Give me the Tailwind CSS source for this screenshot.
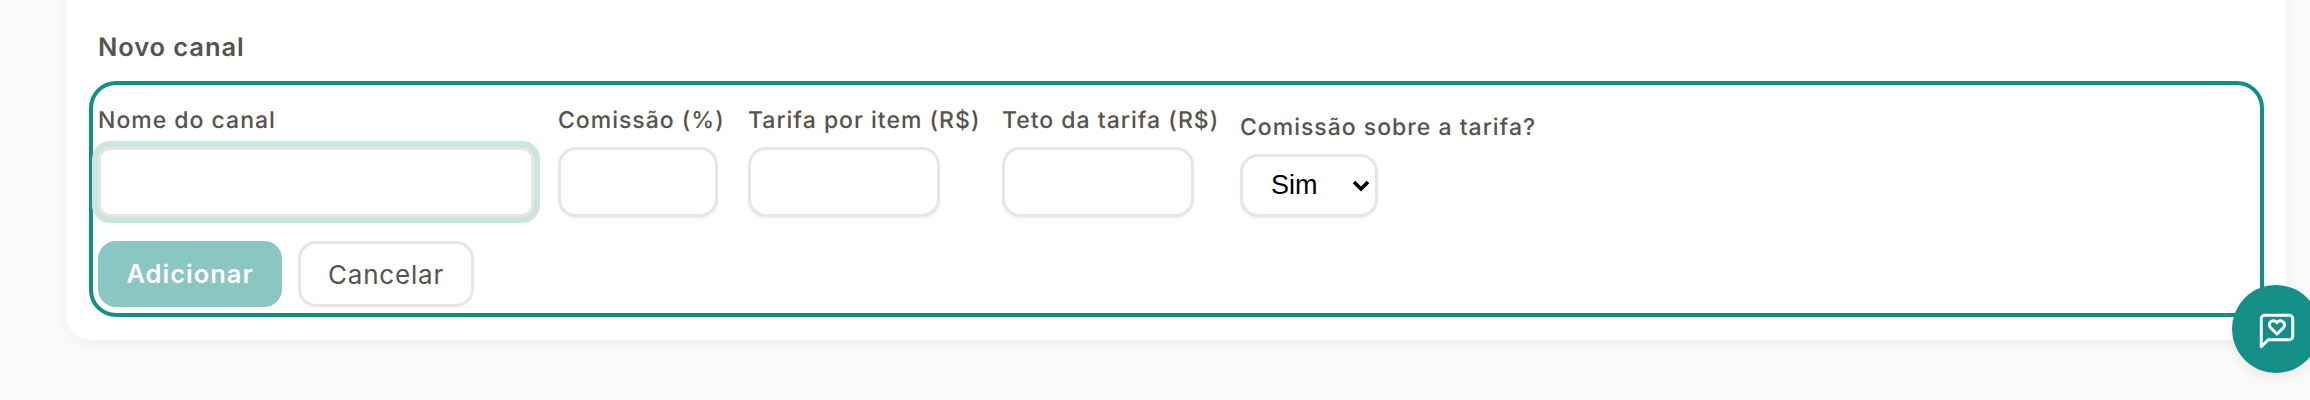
<!DOCTYPE html>
<html lang="pt-BR">
<head>
<meta charset="UTF-8" />
<title>Canais</title>
<script src="https://cdn.jsdelivr.net/npm/@tailwindcss/browser@4"></script>
</head>
<body class="bg-[#fbfaf8] h-[400px] overflow-hidden font-['Inter',sans-serif] [text-rendering:geometricPrecision] relative">
<div class="ml-[66px] mr-[24px] -mt-[24px] h-[364px] bg-white rounded-[24px] shadow-[0_3px_12px_rgba(0,0,0,0.05)] pt-[56px] pl-[23px] pr-[22px]">
  <h2 class="ml-[9px] h-[32px] leading-[32px] text-[25.5px] font-semibold tracking-[0.9px] text-[#57534e]">Novo canal</h2>

  <!-- form -->
  <form class="mt-[17px] h-[236px] border-4 border-[#148f87] rounded-[27px] pl-[5px] pt-[20px]">
    <div class="flex items-end gap-[24px]">
      <label class="flex flex-col w-[436px]">
        <span class="text-[23px] font-[450] leading-[30px] tracking-[1px] whitespace-nowrap text-[#57534e] mb-[12px]">Nome do canal</span>
        <input type="text" class="h-[70px] w-[436px] bg-white border-[3px] border-[#e9e6e2] rounded-[12px] shadow-[0_0_0_6px_#cce5e3]" />
      </label>
      <label class="flex flex-col w-[166px]">
        <span class="text-[23px] font-[450] leading-[30px] tracking-[1px] whitespace-nowrap text-[#57534e] mb-[12px]">Comissão (%)</span>
        <input type="text" class="h-[70px] w-[160px] bg-white border-[3px] border-[#e9e6e2] rounded-[18px] shadow-[0_2px_3px_rgba(0,0,0,0.05)]" />
      </label>
      <label class="flex flex-col w-[230px]">
        <span class="text-[23px] font-[450] leading-[30px] tracking-[1px] whitespace-nowrap text-[#57534e] mb-[12px]">Tarifa por item (R$)</span>
        <input type="text" class="h-[70px] w-[192px] bg-white border-[3px] border-[#e9e6e2] rounded-[18px] shadow-[0_2px_3px_rgba(0,0,0,0.05)]" />
      </label>
      <label class="flex flex-col w-[214px]">
        <span class="text-[23px] font-[450] leading-[30px] tracking-[1px] whitespace-nowrap text-[#57534e] mb-[12px]">Teto da tarifa (R$)</span>
        <input type="text" class="h-[70px] w-[192px] bg-white border-[3px] border-[#e9e6e2] rounded-[18px] shadow-[0_2px_3px_rgba(0,0,0,0.05)]" />
      </label>
      <label class="flex flex-col">
        <span class="text-[23px] font-[450] leading-[30px] tracking-[1px] whitespace-nowrap text-[#57534e] mb-[12px]">Comissão sobre a tarifa?</span>
        <span class="relative w-[138px] h-[63px]">
          <select class="appearance-none w-full h-full bg-white border-[3px] border-[#e9e6e2] rounded-[18px] pl-[28px] text-[27px] text-black font-['Liberation_Sans',sans-serif] shadow-[0_2px_3px_rgba(0,0,0,0.05)]">
            <option>Sim</option>
            <option>Não</option>
          </select>
          <svg class="absolute right-[8px] top-[25px] w-[18px] h-[14px] pointer-events-none" viewBox="0 0 18 14" fill="none" stroke="black" stroke-width="3.6"><path d="M2 3l7 7 7-7"/></svg>
        </span>
      </label>
    </div>
    <div class="flex gap-[16px] mt-[24px]">
      <button type="button" class="w-[184px] h-[66px] bg-[#8ac6c2] text-white text-[25.5px] font-semibold tracking-[1px] rounded-[18px]">Adicionar</button>
      <button type="button" class="w-[176px] h-[66px] bg-white border-[3px] border-[#e9e6e2] text-[#57534e] text-[26px] tracking-[0.8px] rounded-[18px]">Cancelar</button>
    </div>
  </form>
</div>

<!-- feedback button -->
<button class="absolute left-[2232px] top-[285px] w-[88px] h-[88px] rounded-full bg-[#148f87] shadow-[0_4px_12px_rgba(0,0,0,0.08)]">
  <svg class="absolute left-[24px] top-[25px] w-[42px] h-[42px]" viewBox="0 0 24 24" fill="none" stroke="white" stroke-width="1.7" stroke-linecap="round" stroke-linejoin="round">
    <path d="M21 15a2 2 0 0 1-2 2H7l-4 4V5a2 2 0 0 1 2-2h14a2 2 0 0 1 2 2z"/>
    <path transform="translate(12 10) scale(1.25) translate(-12 -10)" stroke-width="1.36" d="M14.8 7.5a1.84 1.84 0 0 0-2.6 0l-.2.3-.3-.3a1.84 1.84 0 1 0-2.6 2.6L12 13l2.9-2.9c.8-.8.8-1.9-.1-2.6Z"/>
  </svg>
</button>
</body>
</html>
